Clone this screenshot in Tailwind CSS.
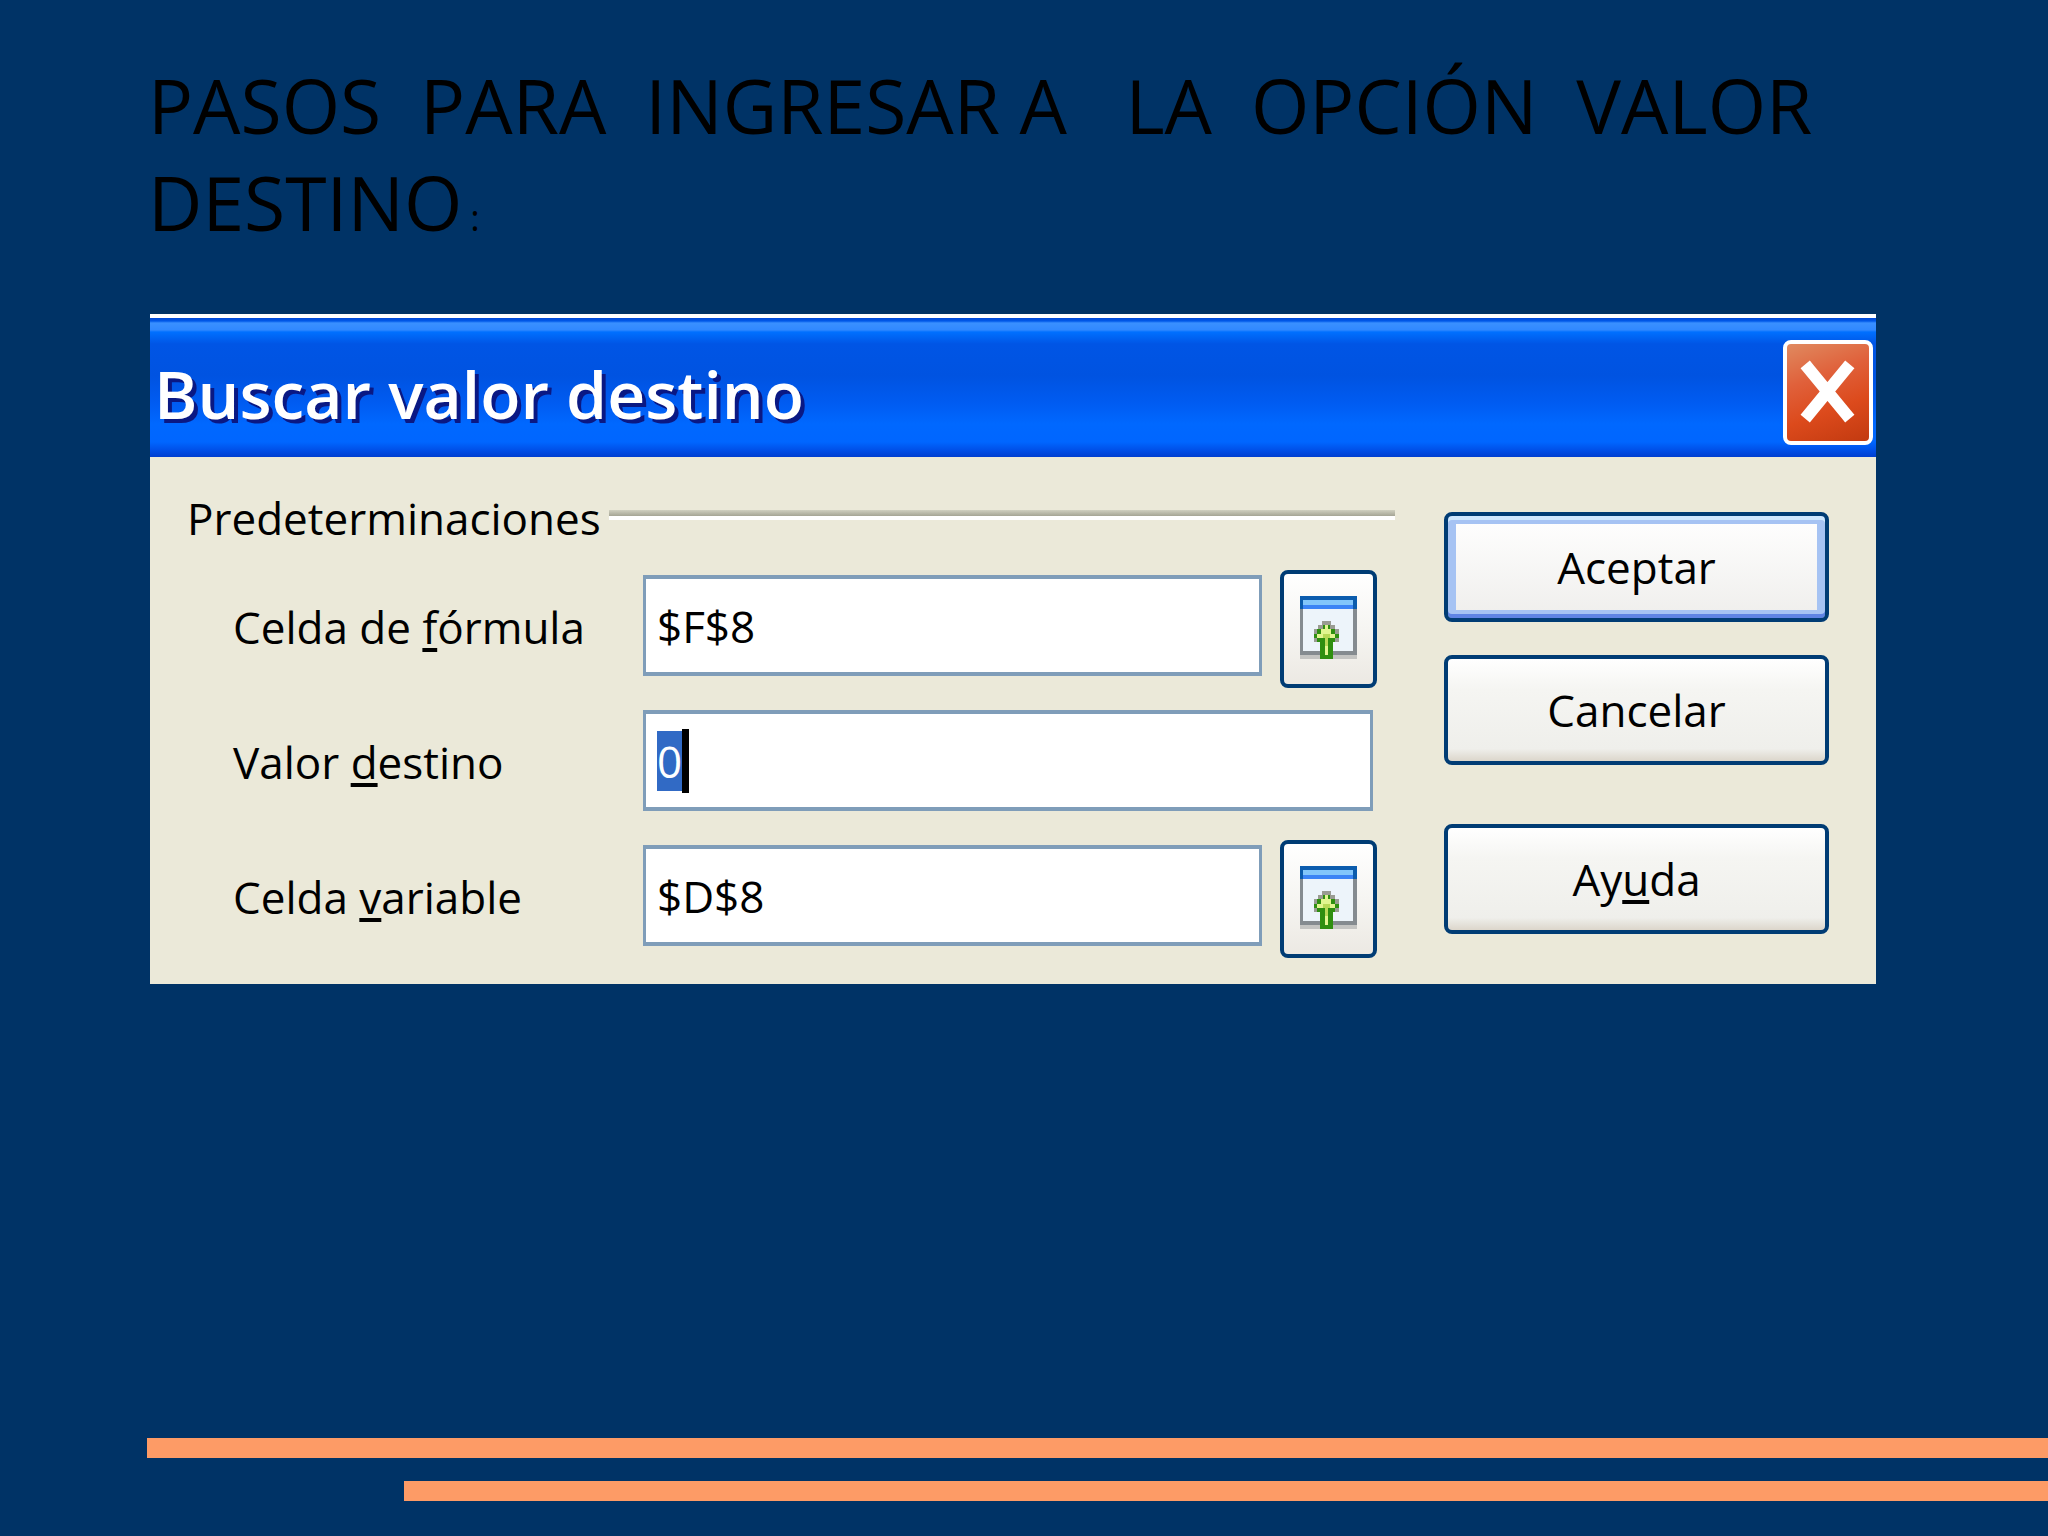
<!DOCTYPE html>
<html lang="es">
<head>
    <meta charset="UTF-8">
    <meta name="viewport" content="width=device-width, initial-scale=1.0">
    <title>Buscar valor destino</title>
    <script src="https://cdn.jsdelivr.net/npm/@tailwindcss/browser@4"></script>
</head>
<body class="flex flex-col min-h-screen bg-[#003366] text-black font-['Open_Sans',sans-serif]">
    <!-- Slide title -->
    <h1 class="pt-[57px] pl-[148px] text-[75px] leading-[97px] font-medium whitespace-pre">PASOS  PARA  INGRESAR A   LA  OPCIÓN  VALOR
DESTINO<span class="ml-2 text-[36px] leading-none font-normal">:</span></h1>

    <!-- Dialog -->
    <main role="dialog" aria-labelledby="dialogTitle" class="mt-[63px] ml-[150px] mr-[172px] border-t-4 border-white bg-[#ebe9d9]">
        <header class="flex items-center justify-between h-[139px] pt-[10px] pl-[4px] pr-[3px] bg-linear-[180deg,#0047d6_0px,#0058e8_3px,#3a90ff_5px,#3088ff_12px,#0070ff_14px,#0055e5_26px,#0053e1_58px,#005cf2_86px,#0068ff_106px,#0066ff_124px,#0050e8_132px,#003ed0_139px]">
            <h2 id="dialogTitle" class="text-[66px] leading-[96px] font-semibold text-white [text-shadow:4px_4px_0_#0a1883]">Buscar valor destino</h2>
            <button type="button" aria-label="Cerrar" class="w-[90px] h-[105px] border-4 border-white rounded-lg bg-linear-[160deg,#e08a60,#e0603a_35%,#dc4a1c_65%,#c23a10]">
                <svg class="w-full h-full" viewBox="0 0 82 97" fill="none" stroke="#fff" stroke-width="12" stroke-linecap="square">
                    <path d="M22 25L59 70M59 25L22 70"/>
                </svg>
            </button>
        </header>

        <form class="flex pt-[33px] pb-[26px] pl-[37px] pr-[47px] text-[44px] leading-[68px]">
            <div role="group" aria-labelledby="groupTitle" class="flex-1 min-w-0">
                <div class="flex h-[80px]">
                    <span id="groupTitle" class="leading-[56px]">Predeterminaciones</span>
                    <span class="flex-1 h-[10px] mt-[20px] ml-[8px] border-b-4 border-white bg-linear-to-b from-[#d0d0c0] to-[#a5a595]"></span>
                </div>

                <div class="flex items-start h-[118px] pl-[46px] pr-[18px]">
                    <label for="formulaCell" class="w-[410px] mt-[5px] leading-[105px] whitespace-nowrap">Celda de <u class="decoration-4 underline-offset-4">f</u>órmula</label>
                    <input id="formulaCell" type="text" value="$F$8" class="flex-1 min-w-0 h-[101px] mt-[5px] px-[11px] border-x-3 border-y-4 border-[#7f9db9] bg-white outline-none">
                    <button type="button" aria-label="Reducir" class="flex items-center justify-center w-[97px] h-[118px] ml-[18px] border-4 border-[#003c74] rounded-lg bg-linear-to-b from-white via-[#f6f5f2] to-[#ece9e3]">
                        <svg class="w-[57px] h-[67px]" viewBox="0 0 57 67" shape-rendering="crispEdges">
                            <path fill="#c4c4c2" d="M0 59H57V63H0z"/>
                            <path fill="#858b90" d="M0 13H57V59H0z"/>
                            <path fill="#edf4fa" d="M3 13H53V55H3z"/>
                            <path fill="#0b5cad" d="M0 0H57V13H0z"/>
                            <path fill="#82c6fb" d="M3 4H53V9H3z"/>
                            <path fill="#3b84f5" d="M3 9H53V13H3z"/>
                            <path fill="#9a9c92" d="M22 25H31V29H35V33H39V46H33V50H20V46H14V33H18V29H22z"/>
                            <path fill="#2f8f10" d="M23 29H30V33H35V38H39V42H35V46H33V63H20V46H17V42H14V38H17V33H23z"/>
                            <path fill="#e2f590" d="M25 29H28V33H31V38H35V42H28V59H25V42H17V38H21V33H25z"/>
                            <path fill="#b9d957" d="M23 38H30V42H28V50H25V42H23z"/>
                        </svg>
                    </button>
                </div>

                <div class="flex items-start h-[101px] mt-[22px] pl-[46px] pr-[22px]">
                    <label for="targetValue" class="w-[410px] leading-[105px] whitespace-nowrap">Valor <u class="decoration-4 underline-offset-4">d</u>estino</label>
                    <div class="relative flex flex-1 min-w-0">
                        <input id="targetValue" type="text" value="0" class="flex-1 min-w-0 h-[101px] px-[11px] border-x-3 border-y-4 border-[#7f9db9] bg-white outline-none caret-transparent selection:bg-[#316ac5] selection:text-white">
                        <span class="absolute left-[39px] top-[19px] w-[7px] h-[64px] bg-black"></span>
                    </div>
                </div>

                <div class="flex items-start h-[118px] mt-[29px] pl-[46px] pr-[18px]">
                    <label for="variableCell" class="w-[410px] mt-[5px] leading-[105px] whitespace-nowrap">Celda <u class="decoration-4 underline-offset-4">v</u>ariable</label>
                    <input id="variableCell" type="text" value="$D$8" class="flex-1 min-w-0 h-[101px] mt-[5px] px-[11px] border-x-3 border-y-4 border-[#7f9db9] bg-white outline-none">
                    <button type="button" aria-label="Reducir" class="flex items-center justify-center w-[97px] h-[118px] ml-[18px] border-4 border-[#003c74] rounded-lg bg-linear-to-b from-white via-[#f6f5f2] to-[#ece9e3]">
                        <svg class="w-[57px] h-[67px]" viewBox="0 0 57 67" shape-rendering="crispEdges">
                            <path fill="#c4c4c2" d="M0 59H57V63H0z"/>
                            <path fill="#858b90" d="M0 13H57V59H0z"/>
                            <path fill="#edf4fa" d="M3 13H53V55H3z"/>
                            <path fill="#0b5cad" d="M0 0H57V13H0z"/>
                            <path fill="#82c6fb" d="M3 4H53V9H3z"/>
                            <path fill="#3b84f5" d="M3 9H53V13H3z"/>
                            <path fill="#9a9c92" d="M22 25H31V29H35V33H39V46H33V50H20V46H14V33H18V29H22z"/>
                            <path fill="#2f8f10" d="M23 29H30V33H35V38H39V42H35V46H33V63H20V46H17V42H14V38H17V33H23z"/>
                            <path fill="#e2f590" d="M25 29H28V33H31V38H35V42H28V59H25V42H17V38H21V33H25z"/>
                            <path fill="#b9d957" d="M23 38H30V42H28V50H25V42H23z"/>
                        </svg>
                    </button>
                </div>
            </div>

            <div class="flex flex-col w-[385px] ml-[49px] pt-[22px]">
                <button type="button" class="h-[110px] border-4 border-[#003c74] rounded-lg bg-linear-to-b from-white to-[#efeeec] shadow-[inset_0_4px_0_#cee7ff,inset_0_-4px_0_#5f84e4,inset_0_0_0_8px_#a6c3f3]">Aceptar</button>
                <button type="button" class="h-[110px] mt-[33px] border-4 border-[#003c74] rounded-lg bg-linear-[180deg,#fff,#f5f5f2_30%,#efefeb_88%,#dcd6cb]">Cancelar</button>
                <button type="button" class="h-[110px] mt-[59px] border-4 border-[#003c74] rounded-lg bg-linear-[180deg,#fff,#f5f5f2_30%,#efefeb_88%,#dcd6cb]">Ay<u class="decoration-4 underline-offset-4">u</u>da</button>
            </div>
        </form>
    </main>

    <!-- Bottom stripes -->
    <footer class="flex flex-col gap-[23px] mt-auto pb-[35px]">
        <div class="h-5 ml-[147px] bg-[#fd9b66]"></div>
        <div class="h-5 ml-[404px] bg-[#fd9b66]"></div>
    </footer>

    <script>
        // The target value starts out selected
        const target = document.getElementById('targetValue');
        target.focus();
        target.select();
    </script>
</body>
</html>
